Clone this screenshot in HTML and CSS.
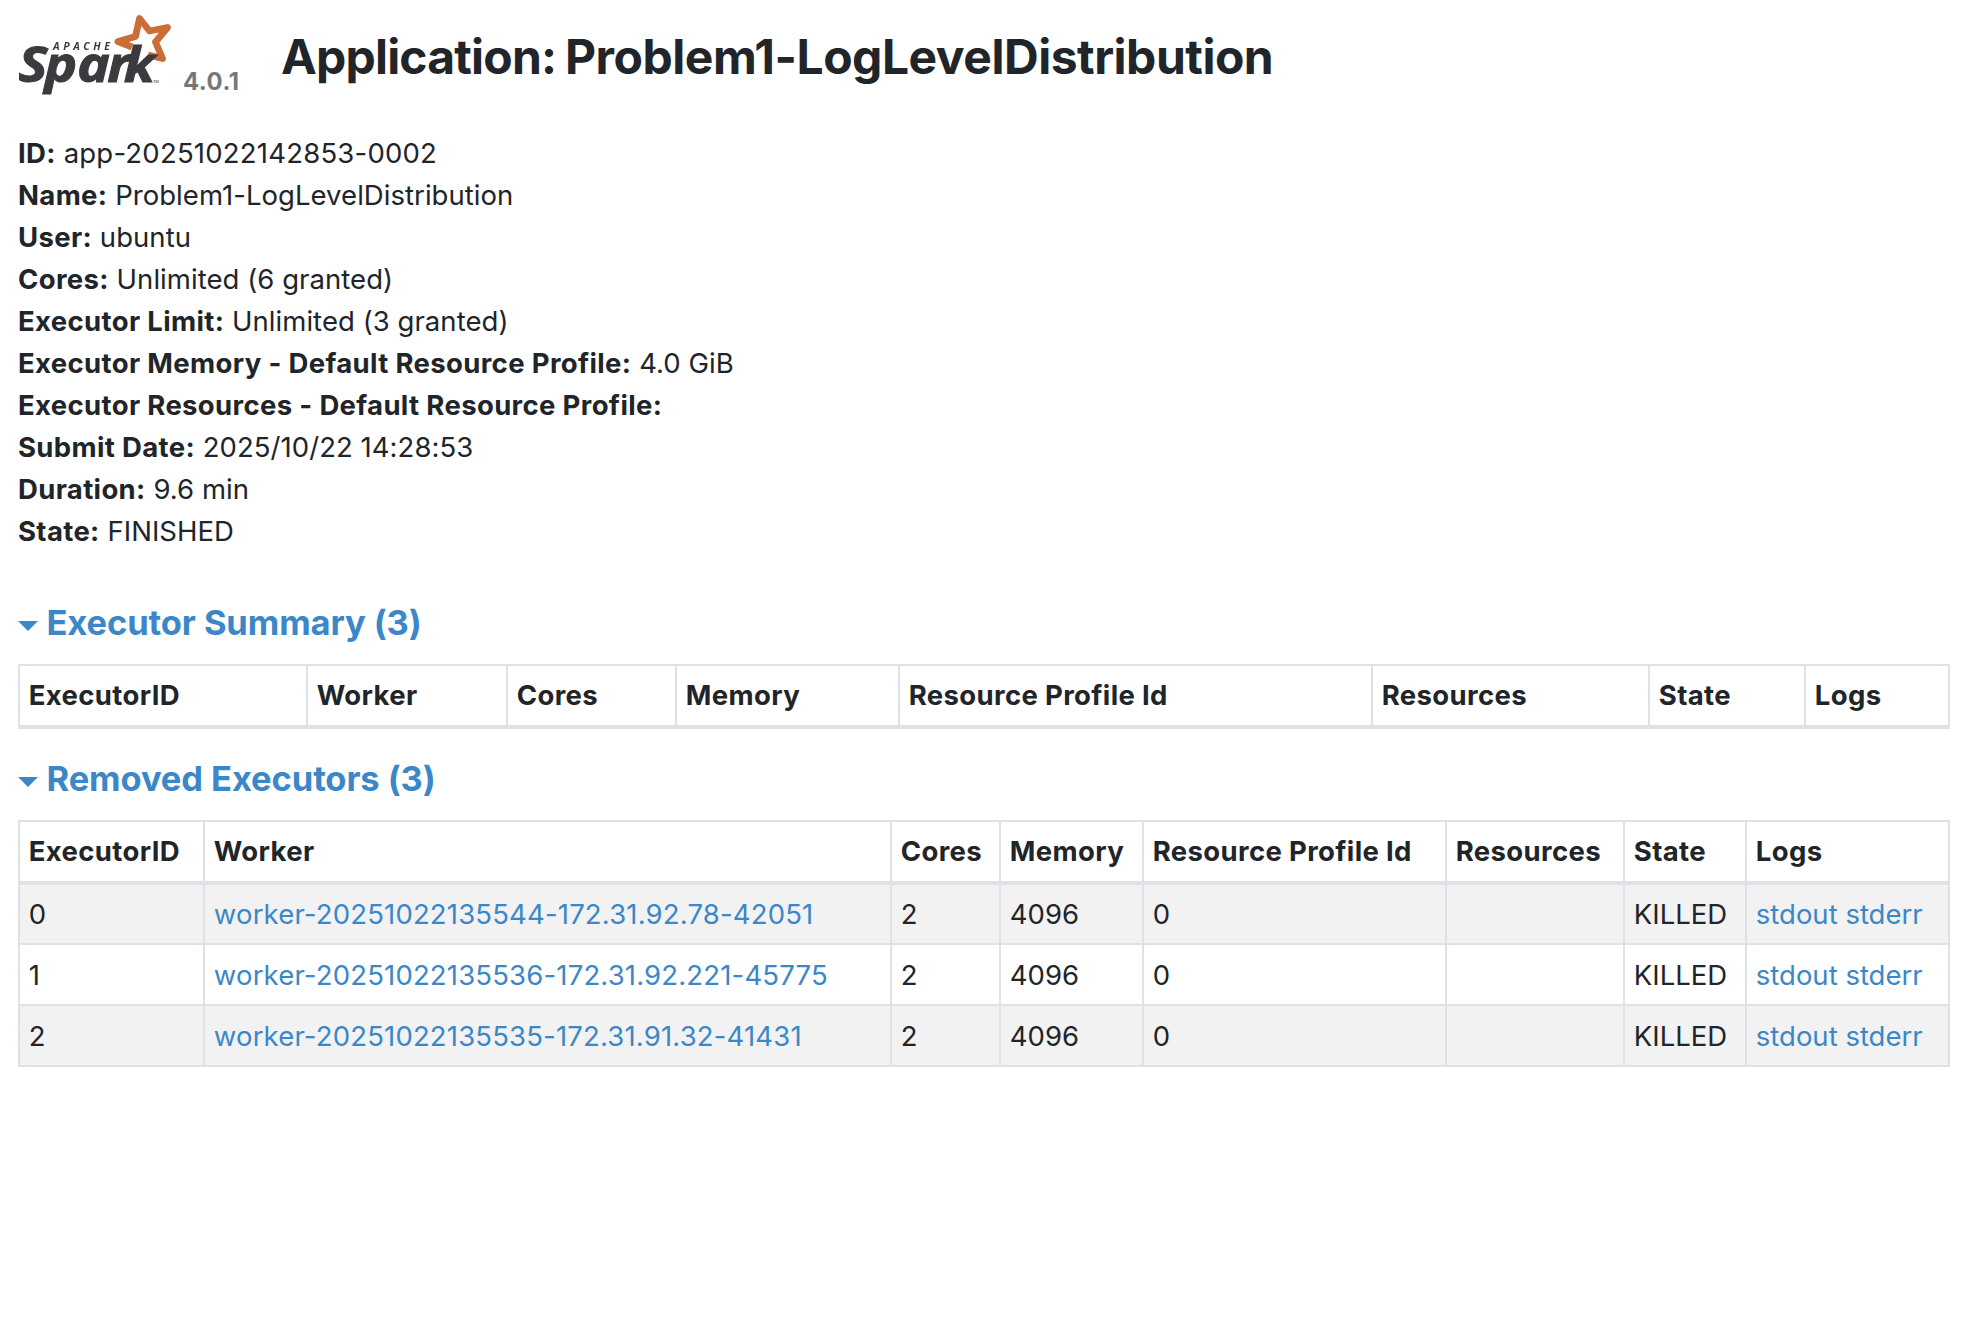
FILE: index.html
```
<!DOCTYPE html>
<html lang="en">
<head>
<meta charset="utf-8">
<title>Application: Problem1-LogLevelDistribution</title>
<link rel="stylesheet" href="styles.css">
</head>
<body>
<header class="header">
  <a class="brand" href="#">
    <svg class="logo" viewBox="0 0 160 86" role="img" aria-label="Apache Spark">
      <path class="logo-star" d="M114 37 L100 31.500 L117.500 26.500 L121.500 8.500 L131.500 21 L149.500 17.500 L137.500 32 L144.500 48.500 L130 45"/>
      <text class="logo-apache" x="35" y="40" textLength="57">APACHE</text>
      <text class="logo-spark" y="72.500" x="0.500 23.500 52.500 79 93.500" transform="scale(1.13 1)">Spark</text>
      <text class="logo-tm" x="135" y="73">TM</text>
    </svg>
    <span class="version">4.0.1</span>
  </a>
  <h1 class="title"><span class="title-label">Application:</span> Problem1-LogLevelDistribution</h1>
</header>
<main>
  <ul class="info">
    <li><strong>ID:</strong> <span class="digits">app-20251022142853-0002</span></li>
    <li><strong>Name:</strong> Problem1-LogLevelDistribution</li>
    <li><strong>User:</strong> ubuntu</li>
    <li><strong>Cores:</strong> Unlimited (6 granted)</li>
    <li><strong>Executor Limit:</strong> Unlimited (3 granted)</li>
    <li><strong>Executor Memory - Default Resource Profile:</strong> 4.0 GiB</li>
    <li><strong>Executor Resources - Default Resource Profile:</strong></li>
    <li><strong>Submit Date:</strong> 2025/10/22 14:28:53</li>
    <li><strong>Duration:</strong> 9.6 min</li>
    <li><strong>State:</strong> FINISHED</li>
  </ul>
  <h4 class="section"><i class="caret"></i><a href="#">Executor Summary (3)</a></h4>
  <table class="grid summary">
    <colgroup><col class="s1"><col class="s2"><col class="s3"><col class="s4"><col class="s5"><col class="s6"><col class="s7"><col class="s8"></colgroup>
    <thead><tr><th>ExecutorID</th><th>Worker</th><th>Cores</th><th>Memory</th><th>Resource Profile Id</th><th>Resources</th><th>State</th><th>Logs</th></tr></thead>
  </table>
  <h4 class="section"><i class="caret"></i><a href="#">Removed Executors (3)</a></h4>
  <table class="grid removed">
    <colgroup><col class="r1"><col class="r2"><col class="r3"><col class="r4"><col class="r5"><col class="r6"><col class="r7"><col class="r8"></colgroup>
    <thead><tr><th>ExecutorID</th><th>Worker</th><th>Cores</th><th>Memory</th><th>Resource Profile Id</th><th>Resources</th><th>State</th><th>Logs</th></tr></thead>
    <tbody>
      <tr><td>0</td><td class="digits"><a href="#">worker-20251022135544-172.31.92.78-42051</a></td><td>2</td><td>4096</td><td>0</td><td></td><td>KILLED</td><td><a href="#">stdout</a> <a href="#">stderr</a></td></tr>
      <tr><td>1</td><td class="digits"><a href="#">worker-20251022135536-172.31.92.221-45775</a></td><td>2</td><td>4096</td><td>0</td><td></td><td>KILLED</td><td><a href="#">stdout</a> <a href="#">stderr</a></td></tr>
      <tr><td>2</td><td class="digits"><a href="#">worker-20251022135535-172.31.91.32-41431</a></td><td>2</td><td>4096</td><td>0</td><td></td><td>KILLED</td><td><a href="#">stdout</a> <a href="#">stderr</a></td></tr>
    </tbody>
  </table>
</main>
</body>
</html>
```
FILE: styles.css
```
* { box-sizing: border-box; }

body {
  margin: 0;
  padding: 0 20px 0 18px;
  background: #fff;
  color: #212529;
  font-family: Inter, "Liberation Sans", sans-serif;
  font-size: 27.5px;
  line-height: 42px;
}

a { color: #3b87c8; text-decoration: none; }

.digits { letter-spacing: 0.17px; }

.header { display: flex; height: 132px; }

.brand { display: flex; width: 263px; padding-top: 10px; gap: 5px; }
.logo { flex: none; width: 160px; height: 86px; overflow: visible; filter: blur(0.5px); }
.logo-star { fill: none; stroke: #cb6d37; stroke-width: 6.8; stroke-linejoin: round; }
.logo-apache { font: italic bold 10.5px "Open Sans", sans-serif; fill: #3c3a3e; }
.logo-spark { font: italic 700 48.5px "Open Sans", sans-serif; fill: #3c3a3e; stroke: #3c3a3e; stroke-width: 1; }
.logo-tm { font: bold 4px "Open Sans", sans-serif; fill: #777; }
.version { padding-top: 51px; color: #777; font-size: 23.8px; font-weight: 700; line-height: 42px; letter-spacing: 0.5px; }

.title { margin: 28px 0 0; font-size: 48px; font-weight: 700; line-height: 58px; letter-spacing: -0.48px; word-spacing: -2.2px; white-space: nowrap; }
.title-label { letter-spacing: -0.8px; }

.info { margin: 0; padding: 0; list-style: none; letter-spacing: 0.05px; }
.info strong { font-weight: 700; letter-spacing: 0.35px; }
.info .digits { letter-spacing: 0.22px; }

.section { display: flex; align-items: center; gap: 8.5px; margin: 50px 0 20px; font-size: 34.5px; font-weight: 700; line-height: 42px; letter-spacing: -0.1px; }
.caret { border: solid transparent; border-width: 10px 10px 0; border-top-color: #3b87c8; margin-top: 5px; }
.summary + .section { margin-top: 29px; }

.grid { width: 1932px; table-layout: fixed; border-collapse: separate; border-spacing: 0; border: solid #dee2e6; border-width: 2px 0 0 2px; }
.grid th, .grid td { height: 61px; padding: 0 0 0 8.8px; border: solid #dee2e6; border-width: 0 2px 2px 0; text-align: left; white-space: nowrap; }
.grid th { height: 63px; padding-bottom: 2px; border-bottom-width: 4px; font-weight: 700; letter-spacing: 0.35px; }
.grid tbody tr:first-child td { height: 60px; padding-bottom: 1px; }
.grid tbody tr:nth-child(odd) { background: #f2f2f2; }

.s1 { width: 288px; } .s2 { width: 200px; } .s3 { width: 169px; } .s4 { width: 223px; }
.s5 { width: 473px; } .s6 { width: 277px; } .s7 { width: 156px; } .s8 { width: 144px; }
.r1 { width: 185px; } .r2 { width: 687px; } .r3 { width: 109px; } .r4 { width: 143px; }
.r5 { width: 303px; } .r6 { width: 178px; } .r7 { width: 122px; } .r8 { width: 203px; }
```
